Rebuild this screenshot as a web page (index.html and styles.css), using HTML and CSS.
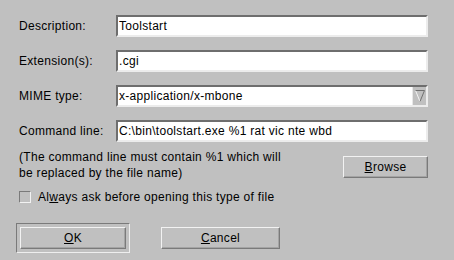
FILE: index.html
```html
<!DOCTYPE html>
<html>
<head>
<meta charset="utf-8">
<link rel="stylesheet" href="styles.css">
</head>
<body>
<div class="dialog">
  <div class="form">
    <label class="label">Description:</label>
    <input class="field" type="text" value="Toolstart">
    <label class="label">Extension(s):</label>
    <input class="field" type="text" value=".cgi">
    <label class="label">MIME type:</label>
    <div class="combo">
      <span class="combo-text">x-application/x-mbone</span>
      <span class="combo-btn"><svg width="12" height="16" viewBox="0 0 12 16"><polyline points="1.5,2.5 6,13.5" fill="none" stroke="#f4f4f4" stroke-width="1"/><polyline points="1.5,2.5 10.5,2.5 6,13.5" fill="none" stroke="#707070" stroke-width="1"/></svg></span>
    </div>
    <label class="label">Command line:</label>
    <input class="field" type="text" value="C:\bin\toolstart.exe %1 rat vic nte wbd">
  </div>
  <div class="help-row">
    <p class="help">(The command line must contain %1 which will<br>be replaced by the file name)</p>
    <button class="btn browse"><u>B</u>rowse</button>
  </div>
  <div class="check-row">
    <span class="checkbox"></span>
    <span class="check-label">Al<u>w</u>ays ask before opening this type of file</span>
  </div>
  <div class="actions">
    <div class="default-frame"><button class="btn ok"><u>O</u>K</button></div>
    <button class="btn cancel"><u>C</u>ancel</button>
  </div>
</div>
</body>
</html>
```
FILE: styles.css
```css
html, body {
  margin: 0;
  padding: 0;
  background: #c0c0c0;
}
body {
  width: 454px;
  height: 260px;
  overflow: hidden;
  font-family: "Liberation Sans", Arial, sans-serif;
  font-size: 12px;
  letter-spacing: 0.3px;
  color: #000;
}
.dialog {
  padding: 15px 26px 0 19px;
}
.form {
  display: grid;
  grid-template-columns: 97px 1fr;
  grid-auto-rows: 22px;
  row-gap: 13px;
  align-items: center;
}
.label {
  line-height: 14px;
}
.field, .combo {
  box-sizing: border-box;
  height: 22px;
  width: 100%;
  margin: 0;
  border: 2px solid;
  border-color: #6e6e6e #ececec #ececec #6e6e6e;
  background: #fff;
  font-family: "Liberation Sans", Arial, sans-serif;
  font-size: 12px;
  letter-spacing: 0.3px;
  color: #000;
  padding: 0 0 0 1px;
  outline: none;
}
.combo {
  display: flex;
  align-items: center;
  justify-content: space-between;
  padding-right: 0;
}
.combo-text {
  line-height: 14px;
}
.combo-btn {
  box-sizing: border-box;
  width: 14px;
  height: 18px;
  background: #c0c0c0;
  border-left: 1px solid #e8e8e8;
  display: flex;
  align-items: center;
  justify-content: center;
}
.combo-btn svg {
  display: block;
}
.help-row {
  display: flex;
  justify-content: space-between;
  align-items: flex-start;
  margin-top: 7px;
}
.help {
  margin: 0;
  line-height: 16px;
}
.btn {
  box-sizing: border-box;
  height: 22px;
  margin: 0;
  padding: 0;
  background: #c0c0c0;
  border: 1px solid;
  border-color: #f2f2f2 #7a7a7a #7a7a7a #f2f2f2;
  box-shadow: inset -1px -1px 0 #a4a4a4;
  font-family: "Liberation Sans", Arial, sans-serif;
  font-size: 12px;
  letter-spacing: 0.3px;
  color: #000;
  line-height: 18px;
}
.browse {
  width: 85px;
  margin-top: 7px;
}
.check-row {
  display: flex;
  align-items: center;
  gap: 7px;
  margin-top: 8px;
  height: 16px;
}
.checkbox {
  box-sizing: border-box;
  width: 12px;
  height: 12px;
  border: 1px solid;
  border-color: #7a7a7a #f2f2f2 #f2f2f2 #7a7a7a;
  background: #c0c0c0;
}
.check-label {
  line-height: 16px;
}
.actions {
  display: flex;
  align-items: center;
  gap: 31px;
  margin-top: 18px;
  margin-left: -3px;
}
.default-frame {
  box-sizing: border-box;
  width: 114px;
  height: 30px;
  padding: 3px;
  border: 1px solid;
  border-color: #7a7a7a #eeeeee #eeeeee #7a7a7a;
}
.ok {
  width: 106px;
}
.cancel {
  width: 119px;
}
```
